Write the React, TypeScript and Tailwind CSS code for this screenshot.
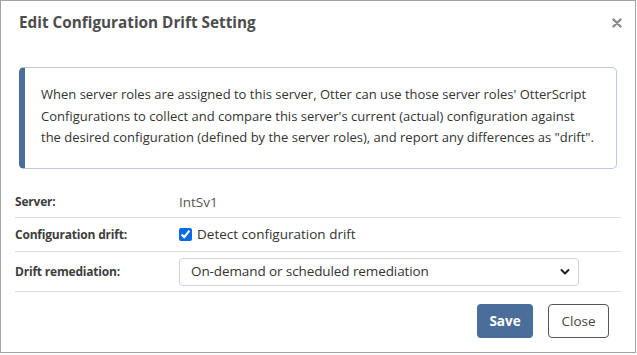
import React from "react";

const font = { fontFamily: '"Open Sans", "Noto Sans", sans-serif' };

export default function App() {
  return (
    <div className="w-[637px] h-[355px] bg-white" style={font}>
      <div className="w-[636px] h-[353px] border border-[#a3a3a3] bg-white flex flex-col">
        <div className="flex items-center justify-between pl-[18px] pr-[13px] pt-[4px] h-[39px]">
          <h1 className="text-[15.3px] font-bold text-[#4d4d4d]">Edit Configuration Drift Setting</h1>
          <svg width="10" height="10" viewBox="0 0 10 10" className="mt-[1px]">
            <path d="M1.5 1.5 L8.5 8.5 M8.5 1.5 L1.5 8.5" stroke="#8a8a8a" strokeWidth="2.4" strokeLinecap="round" />
          </svg>
        </div>
        <div className="mx-[18px] mt-[27px] h-[102px] rounded-[5px] border border-[#b9c9dd] border-l-[6px] border-l-[#4a6d99] pl-[16px] pr-[6px] pt-[16px] text-[13px] leading-[21.5px] text-[#333] whitespace-nowrap">
          When server roles are assigned to this server, Otter can use those server roles' OtterScript
          <br />
          Configurations to collect and compare this server's current (actual) configuration against
          <br />
          the desired configuration (defined by the server roles), and report any differences as "drift".
        </div>
        <div className="mx-[14px] mt-[16px] text-[13.5px] text-[#333]">
          <div className="flex items-center h-[33px] pt-[2px] border-b border-[#dcdcdc]">
            <div className="w-[164px] font-bold text-[#3d3d3d] text-[12px] tracking-[-0.2px]">Server:</div>
            <div className="text-[#555]">IntSv1</div>
          </div>
          <div className="flex items-center h-[34px] border-b border-[#dcdcdc]">
            <div className="w-[164px] font-bold text-[#3d3d3d] text-[12px] tracking-[-0.2px]">Configuration drift:</div>
            <label className="flex items-center gap-[5px]">
              <input type="checkbox" defaultChecked className="w-[13px] h-[13px] accent-[#0a6ae6]" />
              <span>Detect configuration drift</span>
            </label>
          </div>
          <div className="flex items-center h-[40px] border-b border-[#dcdcdc]">
            <div className="w-[164px] font-bold text-[#3d3d3d] text-[12px] tracking-[-0.2px]">Drift remediation:</div>
            <div className="w-[400px] h-[28px] rounded-[4px] border border-[#ced4da] flex items-center justify-between pl-[11px] pr-[8px]">
              <span className="tracking-[-0.1px]">On-demand or scheduled remediation</span>
              <svg width="10" height="8" viewBox="0 0 10 8">
                <path d="M1.5 2 L5 5.5 L8.5 2" stroke="#222" strokeWidth="2" fill="none" strokeLinecap="round" strokeLinejoin="round" />
              </svg>
            </div>
          </div>
        </div>
        <div className="flex justify-end gap-[15px] pr-[26px] mt-[12px]">
          <button className="w-[56px] h-[34px] rounded-[4px] bg-[#4a6d99] text-white font-bold text-[13.5px]">Save</button>
          <button className="w-[61px] h-[34px] rounded-[4px] border border-[#555] text-[#444] text-[13.5px]">Close</button>
        </div>
      </div>
    </div>
  );
}
